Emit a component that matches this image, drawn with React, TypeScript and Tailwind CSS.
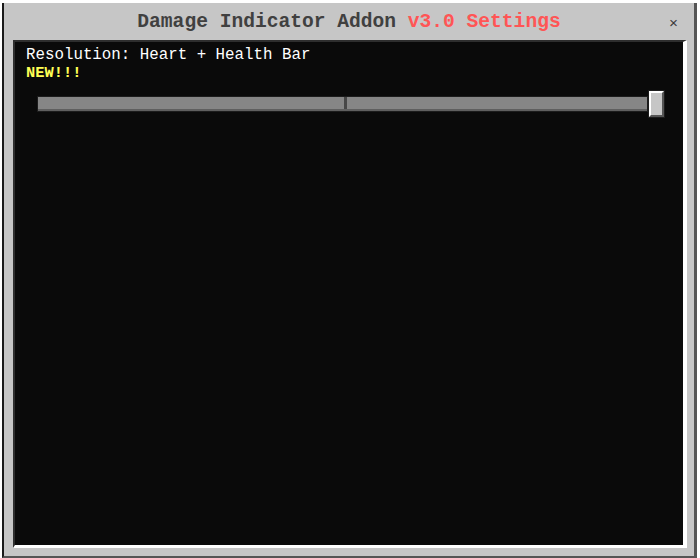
import React from "react";

const mono = { fontFamily: '"Liberation Mono", "DejaVu Sans Mono", monospace' };

function Slider() {
  return (
    <div className="flex items-center ml-[22px] mt-[9px]">
      <div className="w-[611px] h-[16px] border border-[#1c1c1c]">
        <div className="h-full bg-[#868686] border-b-2 border-b-[#5f5f5f] flex justify-center pl-[6px]">
          <div className="w-[3px] h-full bg-[#474747]" />
        </div>
      </div>
      <div className="w-[17px] h-[28px] border border-[#1c1c1c] bg-[#c6c6c6]">
        <div className="w-full h-full border-t-2 border-l-2 border-white border-r-2 border-b-2 border-r-[#555] border-b-[#555]" />
      </div>
    </div>
  );
}

export default function App() {
  return (
    <div className="w-[700px] h-[558px] bg-white pt-[3px] pl-[2px]" style={mono}>
      <div className="w-[695px] h-[555px] bg-[#c6c6c6] border-l-2 border-l-[#1a1a1a] border-r-[3px] border-r-[#555] border-b-2 border-b-[#555] flex flex-col">
        <div className="h-[37px] relative flex items-center justify-center pt-[2px]">
          <div className="text-[19.6px] font-bold leading-none text-[#404040]">
            Damage Indicator Addon <span className="text-[#ff5555]">v3.0 Settings</span>
          </div>
          <div className="absolute right-[16px] top-[14px] text-[15px] leading-none text-[#3a3a3a]">×</div>
        </div>
        <div className="ml-[9px] w-[674px] h-[508px] bg-[#0a0a0a] border-t-2 border-l-2 border-t-[#2e2e2e] border-l-[#2e2e2e] border-r-4 border-b-[3px] border-r-white border-b-white">
          <div className="pl-[11px] pt-[5px] text-[15.8px] leading-[17px] text-white">
            Resolution: Heart + Health Bar
          </div>
          <div className="pl-[11px] pt-[1px] text-[15.4px] leading-[16px] font-bold text-[#ffff55]">NEW!!!</div>
          <Slider />
        </div>
      </div>
    </div>
  );
}
